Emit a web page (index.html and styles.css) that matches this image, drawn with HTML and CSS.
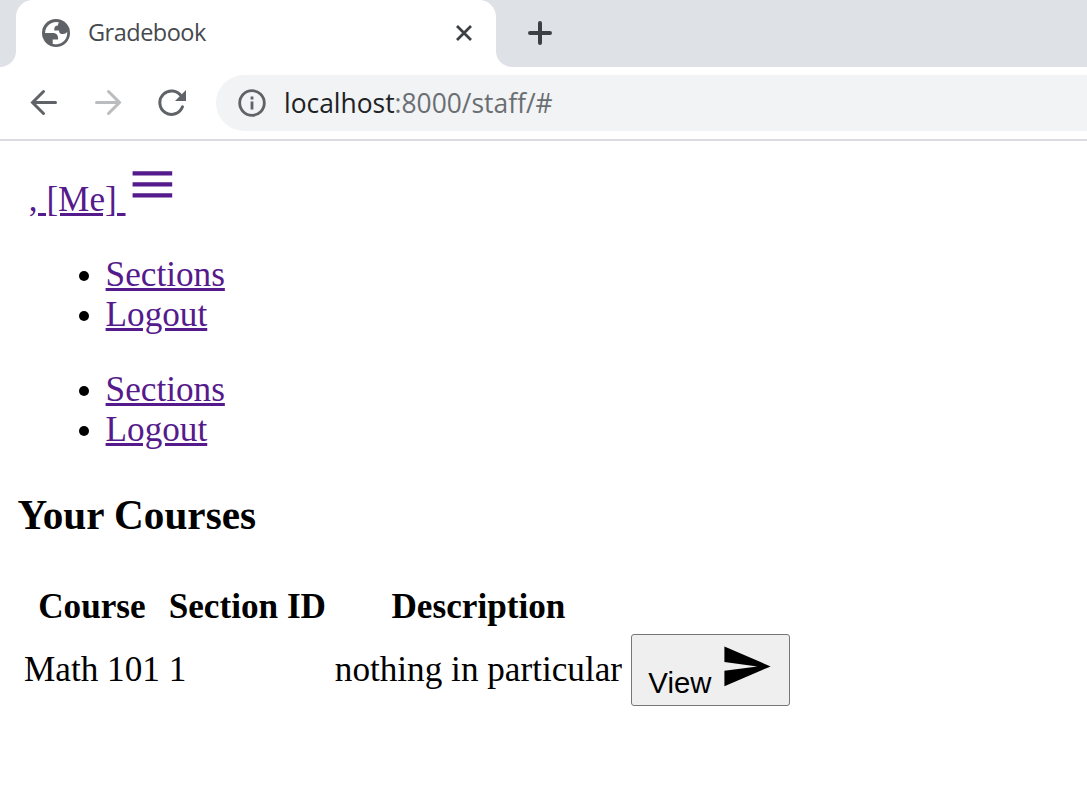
FILE: index.html
```
<!DOCTYPE html>
<html lang="en">
<head>
<meta charset="utf-8">
<title>Gradebook</title>
<link rel="stylesheet" href="styles.css">
</head>
<body>
<header class="browser">
  <div class="tabstrip">
    <div class="strip-left"></div>
    <div class="tab-slot">
      <div class="tab">
        <svg class="favicon" viewBox="0 0 28 28"><circle cx="14" cy="14" r="14"/><path class="sea" d="M3 14h7.500c4 0 6 2 5.500 6.500h-5.300v4.200A11.200 11.200 0 0 0 25.200 13c-1.200 1-2.200 2-4.200 2-2.600 0-4-1-4-3.600h-4.700c-.3-3.200.8-5 3.700-5 0-1.400.2-2.200 1.200-3A11.200 11.200 0 0 0 3 14z"/></svg>
        <span class="tab-title">Gradebook</span>
        <svg class="close" viewBox="0 0 18 18"><path d="M2 2l14 14M16 2L2 16"/></svg>
      </div>
    </div>
    <div class="strip-right">
      <svg class="plus" viewBox="0 0 24 24"><path d="M12 2v20M2 12h20"/></svg>
    </div>
  </div>
  <div class="toolbar">
    <svg class="nav back" viewBox="0 0 28 28"><path d="M25.500 13.500H3M13.500 2.500L2.500 13.500l11 11"/></svg>
    <svg class="nav forward" viewBox="0 0 28 28"><path d="M2.500 13.500H25M14.500 2.500l11 11-11 11"/></svg>
    <svg class="nav reload" viewBox="0 0 28 28"><path d="M23.500 7.500A11.700 11.700 0 1 0 24.500 17.800"/><path class="head" d="M28 1v11H17z"/></svg>
    <div class="omnibox">
      <svg class="info" viewBox="0 0 28 28"><circle cx="14" cy="14" r="12.300"/><path d="M14 12.500v8M14 7.500v3"/></svg>
      <span class="url"><span class="host">localhost</span>:8000/staff/#</span>
    </div>
  </div>
</header>
<main class="page">
  <nav>
    <a class="me" href="#">, [Me] <svg class="icon" viewBox="0 0 24 24"><path d="M3 18h18v-2H3v2zm0-5h18v-2H3v2zm0-7v2h18V6H3z"/></svg></a>
    <ul class="menu"><li><a href="#">Sections</a></li><li><a href="#">Logout</a></li></ul>
    <ul class="menu"><li><a href="#">Sections</a></li><li><a href="#">Logout</a></li></ul>
  </nav>
  <h3 class="heading">Your Courses</h3>
  <table class="courses">
    <thead><tr><th>Course</th><th>Section ID</th><th>Description</th></tr></thead>
    <tbody><tr><td>Math 101</td><td>1</td><td>nothing in particular</td><td><button class="view">View <svg class="icon" viewBox="0 0 24 24"><path d="M2.010 21L23 12 2.010 3 2 10l15 2-15 2z"/></svg></button></td></tr></tbody>
  </table>
</main>
</body>
</html>
```
FILE: styles.css
```
body {
  margin: 0;
  height: 805px;
  overflow: hidden;
  background: #fff;
  color: #000;
  font: 35.2px "Liberation Serif", serif;
}

svg { fill: none; flex: none; }

.browser {
  height: 139px;
  border-bottom: 2px solid #dadce0;
  font-family: "Open Sans", sans-serif;
}

.tabstrip { display: flex; height: 67px; }
.strip-left { width: 16px; background: #dee1e6; border-radius: 0 0 16px 0; }
.tab-slot {
  width: 480px;
  background: linear-gradient(#dee1e6 24px, #fff 24px);
}
.tab {
  display: flex;
  align-items: center;
  box-sizing: border-box;
  height: 67px;
  padding: 0 23px 1px 26px;
  background: #fff;
  border-radius: 17px 17px 0 0;
}
.favicon { width: 28px; height: 28px; fill: #5f6368; }
.favicon .sea { fill: #fff; }
.tab-title {
  margin: -2px 0 0 18px;
  color: #45494d;
  font-size: 23.500px;
  letter-spacing: -0.500px;
  line-height: 32px;
}
.close { width: 18px; height: 18px; margin-left: auto; stroke: #3c4043; stroke-width: 2.800; }
.strip-right {
  flex: 1;
  display: flex;
  align-items: center;
  padding: 0 0 1px 32px;
  background: #dee1e6;
  border-radius: 0 0 0 16px;
}
.plus { width: 24px; height: 24px; stroke: #3c4043; stroke-width: 4; stroke-linecap: round; }

.toolbar { display: flex; align-items: center; height: 72px; padding-left: 30px; }
.nav { width: 28px; height: 28px; margin-right: 36px; stroke: #5f6368; stroke-width: 3; stroke-linecap: round; }
.forward { stroke: #babcbe; }
.reload { margin-right: 30px; }
.reload .head { fill: #5f6368; stroke: none; }
.omnibox {
  flex: 1;
  display: flex;
  align-items: center;
  height: 56px;
  padding-left: 22px;
  background: #f1f3f4;
  border-radius: 28px 0 0 28px;
}
.info { width: 28px; height: 28px; stroke: #5f6368; stroke-width: 2.800; }
.url { margin-left: 18px; color: #6a6e72; font-size: 26.400px; }
.host { color: #202124; }

.page { padding: 17.100px 17.600px; }
a { color: #551a8b; text-decoration-thickness: 3px; }
.icon { width: 52.800px; height: 52.800px; fill: currentColor; }
.me { padding-left: 11.200px; }
.menu { margin: 35.200px 0; padding-left: 88px; }
.heading { margin: 41.200px 0; font-size: 41.200px; }
.courses { border-spacing: 4.400px; }
.courses th, .courses td { padding: 1.900px 2.400px; }
.view {
  padding: 5px 16.500px;
  border: 1px solid #767676;
  border-radius: 3px;
  background: #efefef;
  color: #000;
  font: 29.333px "Liberation Sans", sans-serif;
}
```
